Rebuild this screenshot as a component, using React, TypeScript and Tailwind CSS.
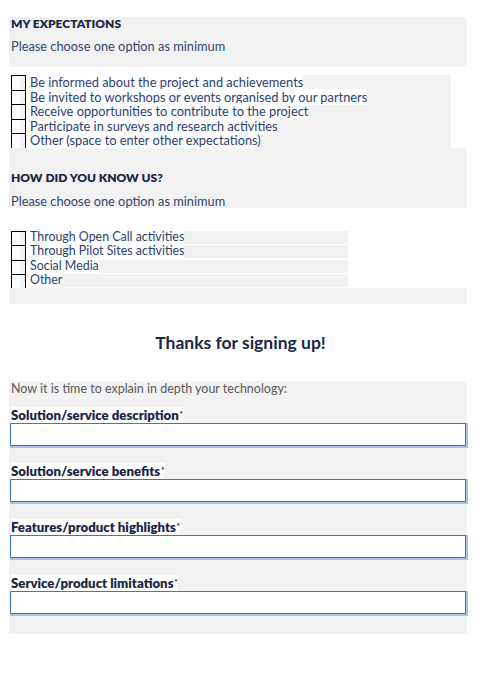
const expectations = [
  'Be informed about the project and achievements',
  'Be invited to workshops or events organised by our partners',
  'Receive opportunities to contribute to the project',
  'Participate in surveys and research activities',
  'Other (space to enter other expectations)',
];

const sources = [
  'Through Open Call activities',
  'Through Pilot Sites activities',
  'Social Media',
  'Other',
];

const fields = [
  'Solution/service description',
  'Solution/service benefits',
  'Features/product highlights',
  'Service/product limitations',
];

function Box() {
  return (
    <div className="flex h-full w-[15px] border-x border-t border-black">
      <div className="w-[8px] bg-white" />
      <div className="flex-1 bg-[#f2f2f2]" />
    </div>
  );
}

function SectionHead({ title }: { title: string }) {
  return (
    <div className="h-[14px] text-[12px] font-extrabold leading-[14px] text-[#1a2747]">
      {title}
    </div>
  );
}

export default function App() {
  return (
    <div
      className="min-h-[691px] w-[481px] bg-white text-[#2d4170]"
      style={{ fontFamily: 'Lato, "Open Sans", sans-serif' }}
    >
      <div className="h-[17px]" />

      {/* My expectations */}
      <div className="ml-[9px] mr-[14px] h-[50px] bg-[#f2f2f2] pl-[2px]">
        <SectionHead title="MY EXPECTATIONS" />
        <div className="mt-[8px] text-[12.8px] leading-[14px] text-[#34466e]">
          Please choose one option as minimum
        </div>
      </div>
      <div className="h-[8px]" />
      <div className="flex h-[73px]">
        <div className="ml-[11px] flex flex-col">
          {expectations.map((e) => (
            <div key={e} className="h-[14.6px]">
              <Box />
            </div>
          ))}
        </div>
        <div className="ml-[4px] flex w-[421px] flex-col bg-[#f2f2f2]">
          {expectations.map((e) => (
            <div key={e} className="h-[14.6px] text-[12.8px] leading-[14.6px]">
              <span className="bg-white">{e}</span>
            </div>
          ))}
        </div>
      </div>

      {/* How did you know us */}
      <div className="ml-[9px] mr-[14px] h-[60px] bg-[#f2f2f2] pl-[2px] pt-[23px]">
        <SectionHead title="HOW DID YOU KNOW US?" />
        <div className="mt-[9px] text-[12.8px] leading-[14px] text-[#34466e]">
          Please choose one option as minimum
        </div>
      </div>
      <div className="h-[23px]" />
      <div className="flex h-[57px]">
        <div className="ml-[11px] flex flex-col">
          {sources.map((s) => (
            <div key={s} className="h-[14.25px]">
              <Box />
            </div>
          ))}
        </div>
        <div className="ml-[4px] flex w-[318px] flex-col gap-[1.5px]">
          {sources.map((s) => (
            <div
              key={s}
              className="h-[12.9px] bg-[#f2f2f2] text-[12.4px] leading-[12.9px]"
            >
              <span className="bg-white">{s}</span>
            </div>
          ))}
        </div>
      </div>
      <div className="ml-[9px] mr-[14px] h-[16px] bg-[#f2f2f2]" />

      {/* Thanks */}
      <div className="flex h-[77px] items-center justify-center pt-[1px]">
        <h2 className="text-[17.5px] font-bold leading-[20px] text-[#1a2747]">
          Thanks for signing up!
        </h2>
      </div>

      <div className="ml-[9px] mr-[14px] h-[253px] bg-[#f2f2f2] pt-[1px]">
        <div className="pl-[2px] text-[12.5px] leading-[14px] text-[#595959]">
          Now it is time to explain in depth your technology:
        </div>
        <div className="mt-[13px] flex flex-col gap-[19px]">
          {fields.map((f) => (
            <div key={f} className="flex flex-col">
              <div className="pl-[2px] text-[13.2px] leading-[13px]">
                <span className="bg-white font-extrabold text-[#1a2747]">
                  {f}
                  <sup className="ml-[1px] text-[7px]">*</sup>
                </span>
              </div>
              <div className="mx-[1px] mt-[1px] h-[23px] border border-[#4472c4] bg-white shadow-[1px_1px_0_1px_#a9c1ea]" />
            </div>
          ))}
        </div>
      </div>
    </div>
  );
}
